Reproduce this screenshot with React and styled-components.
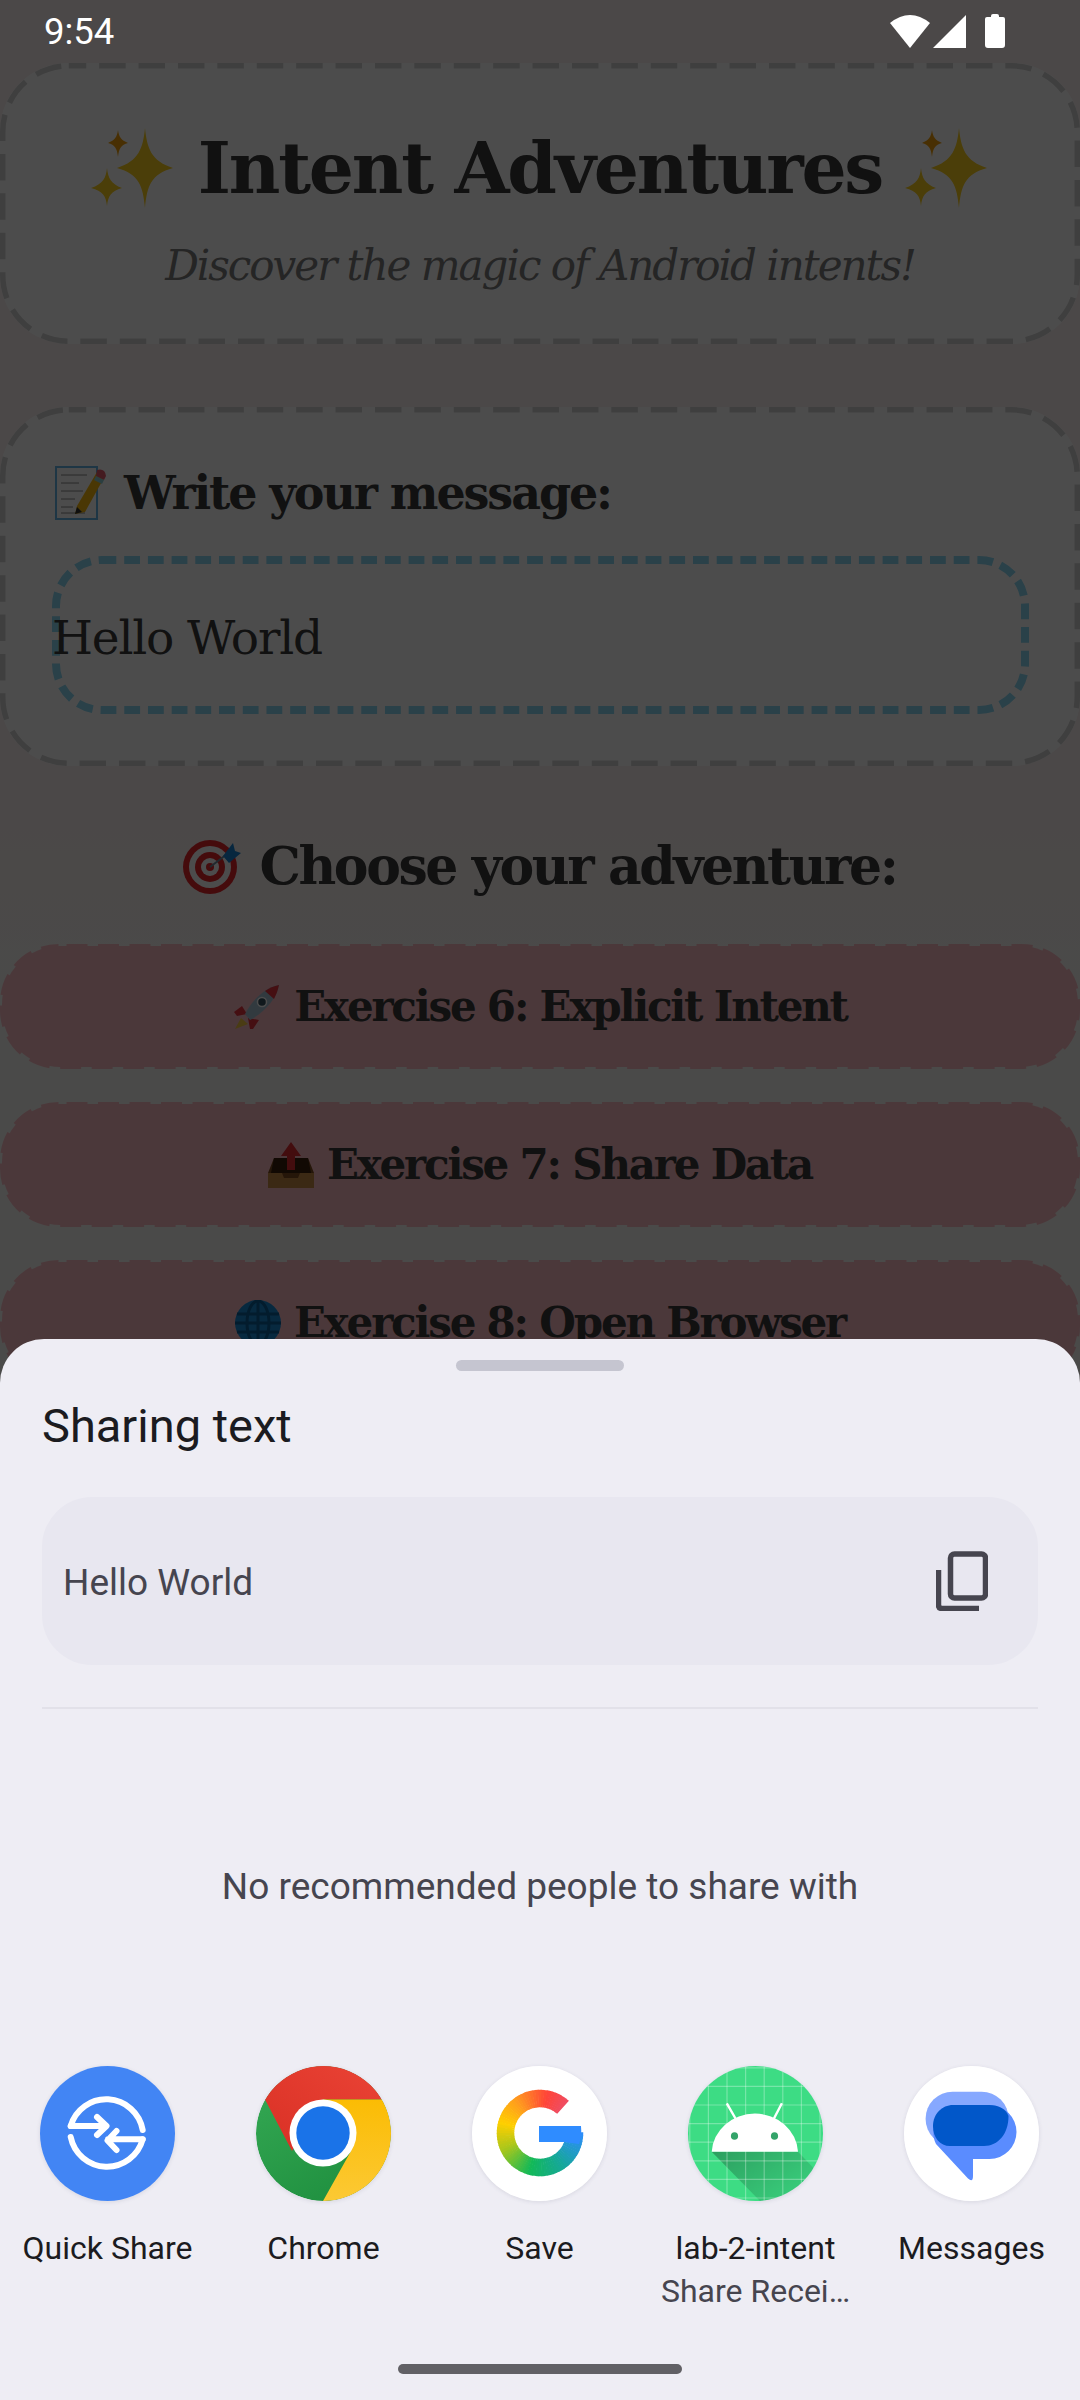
import React from "react";
import styled, { createGlobalStyle } from "styled-components";

const Global = createGlobalStyle`
  html, body { margin: 0; padding: 0; }
  body { width: 1080px; height: 2400px; overflow: hidden; }
`;

const Screen = styled.div`
  position: relative;
  width: 1080px;
  height: 2400px;
  overflow: hidden;
  background: linear-gradient(180deg, #fbf0f0 0, #fbf0f0 780px, #f9f9f4 1000px, #f9f9f4 100%);
  font-family: "DejaVu Serif", "Liberation Serif", serif;
  color: #3a3a3a;
`;
const Content = styled.main`
  display: flex;
  flex-direction: column;
  padding-top: 63px;
`;
const Box = styled.section`
  position: relative;
  box-sizing: border-box;
  height: ${(p) => p.$h}px;
  margin-bottom: ${(p) => p.$mb}px;
  background: #fff;
  border-radius: 68px;
  display: flex;
  flex-direction: column;
  justify-content: ${(p) => p.$justify || "center"};
  padding: ${(p) => p.$pad || "0"};
`;
const Title = styled.h1`
  margin: 0;
  display: flex;
  justify-content: center;
  align-items: center;
  gap: 23px;
  height: 90px;
  font-size: 71px;
  line-height: 90px;
  font-weight: 700;
  letter-spacing: -2.2px;
  color: #3a3a3a;
`;
const Subtitle = styled.p`
  margin: 27px 0 0;
  text-align: center;
  font-size: 42px;
  line-height: 52px;
  font-style: italic;
  letter-spacing: -2px;
  color: #7c7c7c;
`;
const SectionHead = styled.h2`
  margin: 0;
  display: flex;
  align-items: center;
  gap: 17px;
  font-size: 46px;
  line-height: 60px;
  font-weight: 700;
  letter-spacing: -2.1px;
  justify-content: ${(p) => (p.$center ? "center" : "flex-start")};
  padding-left: ${(p) => (p.$center ? "0" : "55px")};
`;
const Input = styled.div`
  position: relative;
  box-sizing: border-box;
  margin: 33px 0 0 52px;
  width: 977px;
  height: 158px;
  display: flex;
  align-items: center;
  font-size: 47px;
  letter-spacing: -1.2px;
`;
const InputText = styled.span`
  position: relative;
  margin-top: 4px;
  line-height: 1;
`;
const Choose = styled(SectionHead)`
  font-size: 52px;
  margin: 0 0 43px;
  line-height: 70px;
  letter-spacing: -2.4px;
  gap: 18px;
`;
const ExerciseButton = styled.div`
  position: relative;
  box-sizing: border-box;
  height: 125px;
  margin-bottom: 33px;
  background: #fbbcc4;
  background-clip: padding-box;
  border: 2.5px solid transparent;
  border-radius: 60px;
  display: flex;
  align-items: center;
  justify-content: center;
  gap: 13px;
  font-size: 42px;
  font-weight: 700;
  letter-spacing: -2.2px;
  color: #3a3a3a;
`;
const FrameSvg = styled.svg`
  position: absolute;
  left: ${(p) => p.$inset || 0}px;
  top: ${(p) => p.$inset || 0}px;
  pointer-events: none;
`;
const DashedFrame = ({ w, h, r, sw, dash, gap, offset, color, inset }) => (
  <FrameSvg width={w} height={h} $inset={inset}>
    <rect
      x={sw / 2}
      y={sw / 2}
      width={w - sw}
      height={h - sw}
      rx={r}
      fill="none"
      stroke={color}
      strokeWidth={sw}
      strokeDasharray={`${dash} ${gap}`}
      strokeDashoffset={offset}
    />
  </FrameSvg>
);
const Scrim = styled.div`
  position: absolute;
  inset: 0;
  background: rgba(0, 0, 0, 0.7);
`;
const StatusBar = styled.div`
  position: absolute;
  top: 0;
  left: 0;
  right: 0;
  height: 62px;
  display: flex;
  align-items: center;
  justify-content: space-between;
  padding: 0 75px 0 44px;
  font-family: Roboto, sans-serif;
  font-size: 36.5px;
  color: #fff;
  box-sizing: border-box;
`;
const Sheet = styled.aside`
  position: absolute;
  left: 0;
  right: 0;
  top: 1339px;
  bottom: 0;
  background: #eeedf4;
  border-radius: 44px 44px 0 0;
  font-family: Roboto, sans-serif;
  display: flex;
  flex-direction: column;
`;
const Handle = styled.div`
  width: 168px;
  height: 11px;
  border-radius: 6px;
  background: #c5c5d0;
  align-self: center;
  margin-top: 21px;
`;
const SheetTitle = styled.div`
  margin: 25px 42px 0;
  font-size: 47px;
  line-height: 60px;
  color: #1b1b20;
`;
const Preview = styled.div`
  margin: 41px 42px 0;
  height: 168px;
  background: #e8e7f0;
  border-radius: 50px;
  display: flex;
  align-items: center;
  justify-content: space-between;
  padding: 0 50px 0 21px;
  font-size: 37px;
  color: #46454f;
`;
const PreviewText = styled.span`
  margin-top: 2px;
`;
const Divider = styled.div`
  margin: 42px 42px 0;
  height: 2px;
  background: #e2e1e9;
`;
const Empty = styled.div`
  margin-top: 152px;
  text-align: center;
  font-size: 37px;
  line-height: 52px;
  color: #46454f;
`;
const Targets = styled.div`
  display: grid;
  grid-template-columns: repeat(5, 216px);
  margin: 153px 0 0 -1px;
`;
const Target = styled.div`
  display: flex;
  flex-direction: column;
  align-items: center;
`;
const TargetIcon = styled.div`
  width: 135px;
  height: 135px;
  border-radius: 50%;
  overflow: hidden;
  box-shadow: 0 1px 4px rgba(60, 60, 90, 0.12);
  svg { display: block; }
`;
const TargetLabel = styled.div`
  margin-top: 25px;
  margin-left: 1px;
  font-size: 32px;
  line-height: 44px;
  color: #1b1b20;
  white-space: nowrap;
`;
const TargetSub = styled.div`
  margin-left: 1px;
  font-size: 32px;
  line-height: 42px;
  color: #46454f;
  white-space: nowrap;
`;
const NavBar = styled.div`
  position: absolute;
  left: 398px;
  width: 284px;
  bottom: 26px;
  height: 10px;
  border-radius: 5px;
  background: #616065;
`;
const Glyph = styled.svg`
  flex: none;
  display: block;
`;

const Sparkles = () => (
  <Glyph width="84" height="80" viewBox="0 0 84 80">
    <path d="M54 0 C56 20 60 33 82 40 C60 46 56 58 54 80 C52 58 48 46 26 40 C48 33 52 20 54 0Z" fill="#fccf1e" />
    <path d="M16 40 C17 50 20 56 31 60 C20 63 17 68 16 78 C15 68 12 63 0 60 C12 56 15 50 16 40Z" fill="#fccf1e" />
    <path d="M27 2 C28 9 30 12 37 15 C30 17 28 20 27 29 C26 20 24 17 17 15 C24 12 26 9 27 2Z" fill="#f09e0a" />
  </Glyph>
);
const Memo = () => (
  <Glyph width="52" height="54" viewBox="0 0 52 54">
    <rect x="1" y="1" width="41" height="52" fill="#fff" stroke="#67b6e6" strokeWidth="2" />
    <path d="M6 9h26M6 17h18M6 25h22M6 33h14M6 41h12M6 47h24" stroke="#8a8a8a" strokeWidth="1" />
    <path d="M42 6 L50 10 L30 46 L20 48 L22 40Z" fill="#f8b90f" />
    <path d="M42 4 Q50 2 51 10 L49 14 L41 10Z" fill="#e45b6d" />
    <path d="M41 10 L49 14 L47 18 L39 14Z" fill="#8fd0d8" />
    <path d="M22 41 L20 48 L27 46Z" fill="#333" />
  </Glyph>
);
const Dart = () => (
  <Glyph width="58" height="55" viewBox="0 0 58 55">
    <circle cx="27" cy="28" r="27" fill="#e6252b" />
    <circle cx="27" cy="28" r="21" fill="#fff" />
    <circle cx="27" cy="28" r="15" fill="#e6252b" />
    <circle cx="27" cy="28" r="9" fill="#fff" />
    <circle cx="27" cy="28" r="4" fill="#e6252b" />
    <path d="M27 28 L48 12" stroke="#6e8b9c" strokeWidth="2" />
    <path d="M40 17 L50 4 L52 12 L58 14 L46 24Z" fill="#1982d2" />
  </Glyph>
);
const Rocket = () => (
  <Glyph width="48" height="46" viewBox="0 0 48 46">
    <path d="M8 34 L2 45 L15 40Z" fill="#f7c843" />
    <path d="M9 22 L1 28 L4 32 L14 30Z" fill="#e6323e" />
    <path d="M26 36 L20 45 L17 45 L15 34Z" fill="#e6323e" />
    <path d="M46 1 C34 3 20 14 12 30 L17 36 C32 28 44 14 46 1Z" fill="#a9c3d4" />
    <path d="M46 1 C41 2 36 4 32 7 L41 15 C43 11 45 6 46 1Z" fill="#e6323e" />
    <circle cx="29" cy="18" r="4.5" fill="#36505f" stroke="#fff" strokeWidth="1.5" />
  </Glyph>
);
const Outbox = () => (
  <Glyph width="46" height="46" viewBox="0 0 46 46">
    <path d="M6 16 H40 L46 31 V46 H0 V31Z" fill="#7c4a1e" />
    <path d="M6 16 H40 L43 31 H3Z" fill="#3a1f0d" />
    <path d="M0 31 H14 L16 36 H30 L32 31 H46 V46 H0Z" fill="#c78a43" />
    <path d="M23 0 L33 14 H27 V28 H19 V14 H13Z" fill="#e02d30" />
  </Glyph>
);
const Globe = () => (
  <Glyph width="46" height="46" viewBox="0 0 46 46" fill="none">
    <circle cx="23" cy="23" r="23" fill="#1a8ad3" />
    <g stroke="#0a5e96" strokeWidth="3">
      <ellipse cx="23" cy="23" rx="11" ry="22" />
      <path d="M23 0V46M2 14H44M0 23H46M2 32H44" />
    </g>
  </Glyph>
);
const Wifi = () => (
  <Glyph width="40" height="33" viewBox="0 0 40 33">
    <path d="M20 33 L0 8 Q20 -8 40 8Z" fill="#fff" />
  </Glyph>
);
const Signal = () => (
  <Glyph width="33" height="33" viewBox="0 0 33 33">
    <path d="M33 0 V33 H0Z" fill="#fff" />
  </Glyph>
);
const Battery = () => (
  <Glyph width="20" height="34" viewBox="0 0 20 34">
    <path d="M6 2 Q6 0 8 0 H12 Q14 0 14 2 V3 H18 Q20 3 20 5 V31 Q20 34 17 34 H3 Q0 34 0 31 V5 Q0 3 2 3 H6Z" fill="#fff" />
  </Glyph>
);
const StatusIcons = styled.div`
  display: flex;
  align-items: center;
  gap: 3px;
  & > svg:last-child { margin-left: 16px; }
`;
const Copy = () => (
  <Glyph width="52" height="60" viewBox="0 0 52 60" fill="none" stroke="#46454f" strokeWidth="5.5">
    <rect x="14.5" y="3" width="35" height="44" rx="4" />
    <path d="M2.5 19 V54 Q2.5 57.5 6 57.5 H43" />
  </Glyph>
);
const QuickShare = () => (
  <svg width="135" height="135" viewBox="0 0 135 135" fill="none" stroke="#fff" strokeWidth="6" strokeLinecap="round" strokeLinejoin="round">
    <rect width="135" height="135" fill="#4285f4" stroke="none" />
    <path d="M30.7 60 A37 37 0 0 1 102.7 64" />
    <path d="M30.7 60 H66 M57 51 L66.5 60 L57 69" />
    <path d="M30.7 71 A37 37 0 0 0 102.7 73.3" />
    <path d="M102.7 73.3 H68 M76.5 65 L67.5 74.5 L76.5 84" />
  </svg>
);
const Chrome = () => (
  <svg width="135" height="135" viewBox="0 0 135 135">
    <defs>
      <linearGradient id="cr" x1="0" y1="1" x2="1" y2="0"><stop offset="0" stopColor="#d93025" /><stop offset="1" stopColor="#ea4335" /></linearGradient>
      <linearGradient id="cg" x1="0.2" y1="0" x2="0.8" y2="1"><stop offset="0" stopColor="#34a853" /><stop offset="1" stopColor="#1e8e3e" /></linearGradient>
      <linearGradient id="cy" x1="0.5" y1="0" x2="0.5" y2="1"><stop offset="0" stopColor="#fbbc04" /><stop offset="1" stopColor="#fcc934" /></linearGradient>
    </defs>
    <circle cx="67.5" cy="67.5" r="67.5" fill="url(#cg)" />
    <path d="M9 33.5 A67.5 67.5 0 0 1 126 33.5 H67 L36 85Z" fill="url(#cr)" />
    <path d="M126 33.5 A67.5 67.5 0 0 1 67 135 L95 85 L67 33.5Z" fill="url(#cy)" />
    <circle cx="67" cy="67" r="33.5" fill="#fff" />
    <circle cx="67" cy="67" r="26.7" fill="#1a73e8" />
  </svg>
);

const gStops = [
  [0, [240, 76, 96]], [30, [255, 69, 56]], [75, [255, 154, 31]], [115, [255, 207, 0]],
  [155, [168, 198, 28]], [205, [18, 185, 88]], [255, [22, 167, 154]], [312, [47, 140, 255]],
];
const gColor = (t) => {
  let i = 0;
  while (i < gStops.length - 2 && t > gStops[i + 1][0]) i += 1;
  const [a, ca] = gStops[i];
  const [b, cb] = gStops[i + 1];
  const k = Math.min(1, Math.max(0, (t - a) / (b - a)));
  return `rgb(${ca.map((v, j) => Math.round(v + (cb[j] - v) * k)).join(",")})`;
};
const GoogleArc = () => {
  const cx = 68, cy = 67, r = 34.5;
  const start = -48;
  const parts = [];
  for (let t = 0; t < 312; t += 4) {
    const a0 = ((start - t) * Math.PI) / 180;
    const a1 = ((start - t - 5) * Math.PI) / 180;
    parts.push(
      <path
        key={t}
        d={`M${cx + r * Math.cos(a0)} ${cy + r * Math.sin(a0)} A${r} ${r} 0 0 0 ${cx + r * Math.cos(a1)} ${cy + r * Math.sin(a1)}`}
        stroke={gColor(t)}
      />
    );
  }
  return <g fill="none" strokeWidth="17.5">{parts}</g>;
};
const Google = () => (
  <svg width="135" height="135" viewBox="0 0 135 135">
    <rect width="135" height="135" fill="#fff" />
    <GoogleArc />
    <path d="M67 60 H109 Q110 70 107 78 L92 76 H67Z" fill="#2f8cff" />
  </svg>
);
const gridPos = [1.8, 20.4, 39, 57.6, 76.2, 94.8, 113.4, 132];
const AndroidIcon = () => (
  <svg width="135" height="135" viewBox="0 0 135 135">
    <defs>
      <linearGradient id="ash" x1="0" y1="0" x2="1" y2="0.6"><stop offset="0" stopColor="#000" stopOpacity="0.28" /><stop offset="1" stopColor="#000" stopOpacity="0.06" /></linearGradient>
    </defs>
    <rect width="135" height="135" fill="#3ddc84" />
    <path d="M23.7 85.7 L72 135 H135 V112 L110 85.7Z" fill="url(#ash)" />
    <g stroke="#fff" strokeOpacity="0.3" strokeWidth="1.2">
      {gridPos.map((p) => <path key={`v${p}`} d={`M${p} 0V135`} />)}
      {gridPos.map((p) => <path key={`h${p}`} d={`M0 ${p}H135`} />)}
    </g>
    <path d="M23.7 85.7 A43.2 40 0 0 1 110 85.7Z" fill="#fff" />
    <path d="M38.8 37.3 L47.8 53 M93.9 37.3 L85.7 53" stroke="#fff" strokeWidth="2.4" />
    <ellipse cx="46.5" cy="70" rx="3.6" ry="3.8" fill="#34a46a" />
    <ellipse cx="86.5" cy="70" rx="3.6" ry="3.8" fill="#34a46a" />
  </svg>
);
const Messages = () => (
  <svg width="135" height="135" viewBox="0 0 135 135">
    <rect width="135" height="135" fill="#fff" />
    <rect x="21.6" y="25.7" width="83" height="54.3" rx="27" fill="#86a8ff" />
    <path d="M32 78 L64 112.5 Q69 117 69 110 V93 H85.5 A27 27 0 0 0 85.5 39 H55 A27 27 0 0 0 32 78Z" fill="#5a8cff" />
    <path d="M49 39 H85 C95 39 102 43 104.5 50 C104.5 68 94 80 80 80 H46 C36 80 29 72 29 60 C29 48 38 39 49 39Z" fill="#0157c9" />
  </svg>
);

const apps = [
  { name: "Quick Share", icon: <QuickShare /> },
  { name: "Chrome", icon: <Chrome /> },
  { name: "Save", icon: <Google /> },
  { name: "lab-2-intent", sub: "Share Recei…", icon: <AndroidIcon /> },
  { name: "Messages", icon: <Messages /> },
];

const boxDash = { r: 66, sw: 5.5, dash: 26.5, gap: 12.9, offset: 9, color: "#d3d3d3" };
const buttonDash = { w: 1080, h: 125, r: 56, sw: 5, dash: 21, gap: 10.5, offset: 23.5, color: "#fbbcc4", inset: -2.5 };

const exercises = [
  { label: "Exercise 6: Explicit Intent", icon: <Rocket /> },
  { label: "Exercise 7: Share Data", icon: <Outbox /> },
  { label: "Exercise 8: Open Browser", icon: <Globe /> },
];

export default function App() {
  return (
    <Screen>
      <Global />
      <Content>
        <Box $h={281} $mb={63} $pad="8px 0 0">
          <DashedFrame w={1080} h={281} {...boxDash} />
          <Title><Sparkles /><span>Intent Adventures</span><Sparkles /></Title>
          <Subtitle>Discover the magic of Android intents!</Subtitle>
        </Box>
        <Box $h={359} $mb={65} $justify="flex-start" $pad="56px 0 0">
          <DashedFrame w={1080} h={359} {...boxDash} />
          <SectionHead><Memo /><span>Write your message:</span></SectionHead>
          <Input>
            <DashedFrame w={977} h={158} r={46} sw={8} dash={15.8} gap={7.9} offset={1.5} color="#8dd9f4" />
            <InputText>Hello World</InputText>
          </Input>
        </Box>
        <Choose $center><Dart /><span>Choose your adventure:</span></Choose>
        {exercises.map((e) => (
          <ExerciseButton key={e.label}>
            <DashedFrame {...buttonDash} />
            {e.icon}
            <span>{e.label}</span>
          </ExerciseButton>
        ))}
      </Content>
      <Scrim />
      <StatusBar>
        <span>9:54</span>
        <StatusIcons><Wifi /><Signal /><Battery /></StatusIcons>
      </StatusBar>
      <Sheet>
        <Handle />
        <SheetTitle>Sharing text</SheetTitle>
        <Preview><PreviewText>Hello World</PreviewText><Copy /></Preview>
        <Divider />
        <Empty>No recommended people to share with</Empty>
        <Targets>
          {apps.map((a) => (
            <Target key={a.name}>
              <TargetIcon>{a.icon}</TargetIcon>
              <TargetLabel>{a.name}</TargetLabel>
              {a.sub && <TargetSub>{a.sub}</TargetSub>}
            </Target>
          ))}
        </Targets>
      </Sheet>
      <NavBar />
    </Screen>
  );
}
